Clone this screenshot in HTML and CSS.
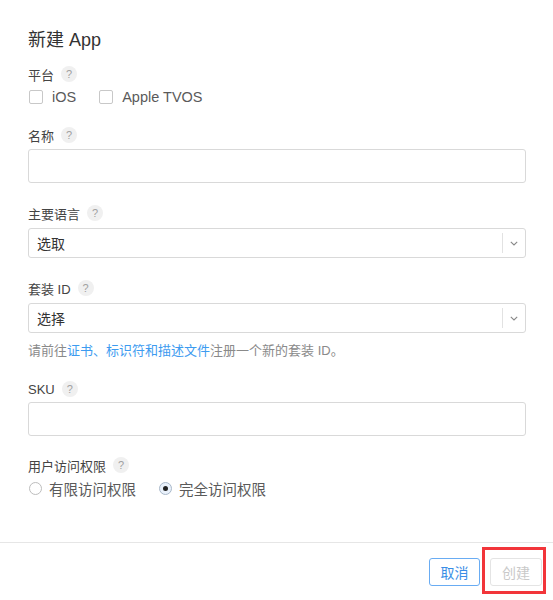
FILE: index.html
```html
<!DOCTYPE html>
<html lang="zh">
<head>
<meta charset="utf-8">
<title>新建 App</title>
<link rel="stylesheet" href="styles.css">
</head>
<body>
<div class="modal">
  <div class="content">
    <h1 class="title">新建 App</h1>

    <div class="label label-first">平台 <span class="help">?</span></div>
    <div class="options">
      <label class="opt"><span class="checkbox"></span>iOS</label>
      <label class="opt"><span class="checkbox"></span>Apple TVOS</label>
    </div>

    <div class="label label-gap">名称 <span class="help">?</span></div>
    <div class="input input-name"></div>

    <div class="label label-gap2">主要语言 <span class="help">?</span></div>
    <div class="select"><span class="select-text">选取</span><span class="select-arrow"><svg width="8" height="5" viewBox="0 0 8 5"><path d="M0.8 0.8 L4 4 L7.2 0.8" fill="none" stroke="#888" stroke-width="1.1"/></svg></span></div>

    <div class="label label-gap2">套装 ID <span class="help">?</span></div>
    <div class="select"><span class="select-text">选择</span><span class="select-arrow"><svg width="8" height="5" viewBox="0 0 8 5"><path d="M0.8 0.8 L4 4 L7.2 0.8" fill="none" stroke="#888" stroke-width="1.1"/></svg></span></div>
    <p class="hint">请前往<a class="link">证书、标识符和描述文件</a>注册一个新的套装 ID。</p>

    <div class="label label-gap3">SKU <span class="help">?</span></div>
    <div class="input input-sku"></div>

    <div class="label label-gap4">用户访问权限 <span class="help">?</span></div>
    <div class="options">
      <label class="opt opt-radio"><span class="radio"></span>有限访问权限</label>
      <label class="opt opt-radio"><span class="radio radio-on"></span>完全访问权限</label>
    </div>
  </div>
  <div class="footer">
    <button class="btn btn-cancel">取消</button>
    <span class="highlight"><button class="btn btn-create" disabled>创建</button></span>
  </div>
</div>
</body>
</html>
```

FILE: styles.css
```css
html, body {
  margin: 0;
  padding: 0;
  background: #ffffff;
}
body {
  font-family: "Liberation Sans", "Noto Sans CJK SC", sans-serif;
  color: #333333;
  width: 553px;
  height: 600px;
  overflow: hidden;
}
.modal {
  width: 553px;
  height: 600px;
  display: flex;
  flex-direction: column;
}
.content {
  padding: 28px 27px 0 28px;
  height: 514px;
  box-sizing: border-box;
}
.title {
  margin: 0;
  font-size: 18px;
  font-weight: normal;
  line-height: 24px;
  color: #333333;
}
.label {
  display: flex;
  align-items: center;
  height: 20px;
  font-size: 13px;
  color: #444444;
}
.label-first { margin-top: 12px; }
.label-gap { margin-top: 18px; }
.label-gap2 { margin-top: 20px; }
.label-gap3 { margin-top: 18px; }
.label-gap4 { margin-top: 19px; }
.help {
  display: inline-flex;
  align-items: center;
  justify-content: center;
  width: 16px;
  height: 16px;
  margin-left: 7px;
  border-radius: 50%;
  background: #f0f0f0;
  color: #a0a0a0;
  font-size: 11px;
  line-height: 1;
}
.options {
  display: flex;
  align-items: center;
  height: 20px;
  margin-top: 3px;
  gap: 22px;
}
.opt {
  display: flex;
  align-items: center;
  font-size: 14.5px;
  color: #5a5a5a;
}
.checkbox {
  width: 12px;
  height: 12px;
  border: 1px solid #c8c8c8;
  border-radius: 2px;
  margin: 0 9px 0 1px;
  background: #fff;
}
.radio {
  width: 11px;
  height: 11px;
  border: 1px solid #bdbdbd;
  border-radius: 50%;
  margin: 0 7px 0 1px;
  box-sizing: content-box;
  position: relative;
}
.radio-on {
  border-color: #a9b8c9;
  background: #e9f1fb;
}
.radio-on::after {
  content: "";
  position: absolute;
  left: 3px;
  top: 3px;
  width: 5px;
  height: 5px;
  border-radius: 50%;
  background: #222222;
}
.input {
  box-sizing: border-box;
  height: 34px;
  border: 1px solid #d9d9d9;
  border-radius: 3px;
  background: #fff;
}
.input-name { margin-top: 4px; }
.input-sku { margin-top: 3px; }
.select {
  box-sizing: border-box;
  height: 30px;
  margin-top: 5px;
  border: 1px solid #d9d9d9;
  border-radius: 3px;
  display: flex;
  align-items: center;
}
.select-text {
  flex: 1;
  padding-left: 8px;
  font-size: 14px;
  color: #333333;
}
.select-arrow {
  width: 22px;
  height: 20px;
  border-left: 1px solid #e2e2e2;
  display: flex;
  align-items: center;
  justify-content: center;
}
.hint {
  margin: 8px 0 0 0;
  line-height: 20px;
  font-size: 13px;
  color: #8a8a8a;
}
.link {
  color: #3d9bf0;
}
.footer {
  border-top: 1px solid #e6e6e6;
  height: 58px;
  box-sizing: border-box;
  display: flex;
  justify-content: flex-end;
  align-items: flex-start;
  padding: 15px 7px 0 0;
  margin-top: 28px;
}
.btn {
  box-sizing: border-box;
  height: 28px;
  width: 51px;
  padding: 0;
  border-radius: 3px;
  font-family: "Liberation Sans", "Noto Sans CJK SC", sans-serif;
  font-size: 14px;
  background: #fff;
}
.btn-cancel {
  border: 1px solid #69acf3;
  color: #3a8ee6;
  margin-right: 2px;
}
.highlight {
  display: inline-block;
  border: 3px solid #f2353a;
  padding: 8px 1px 5px 5px;
  margin-top: -11px;
}
.btn-create {
  border: 1px solid #e4e4e4;
  color: #c9c9c9;
  width: 52px;
}
```
